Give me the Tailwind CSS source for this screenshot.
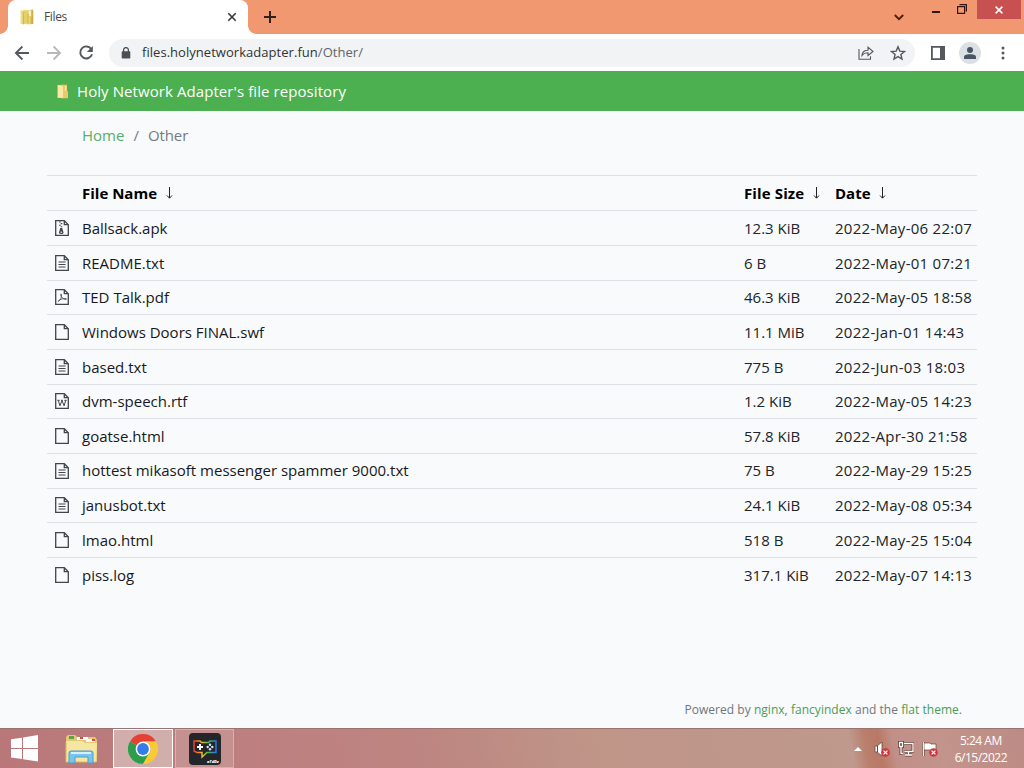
<!DOCTYPE html>
<html lang="en">

<head>
    <meta charset="UTF-8" />
    <meta name="viewport" content="width=device-width, initial-scale=1.0" />
    <title>Files</title>
    <script src="https://cdn.jsdelivr.net/npm/@tailwindcss/browser@4"></script>
</head>

<body class="flex h-screen w-screen flex-col overflow-hidden bg-[#f8fafc] font-['Open_Sans','Noto_Sans',sans-serif] text-[#212529]">
    <!-- icon sprites -->
    <svg class="absolute size-0">
        <defs>
            <linearGradient id="gold" x1="0" x2="1">
                <stop offset="0" stop-color="#f7e9a0" />
                <stop offset=".5" stop-color="#ead36c" />
                <stop offset="1" stop-color="#c9a83c" />
            </linearGradient>
            <linearGradient id="rainbow" x1="0" x2="1">
                <stop offset="0" stop-color="#ef3a2d" />
                <stop offset=".35" stop-color="#f4b82b" />
                <stop offset=".65" stop-color="#49bd4b" />
                <stop offset="1" stop-color="#2877ec" />
            </linearGradient>
            <symbol id="file" viewBox="0 0 14 16">
                <path d="M.7.7h8.6l4 4v10.6H.7zM9.3.7v4h4" fill="none" stroke="currentColor" stroke-width="1.3" />
            </symbol>
            <symbol id="text" viewBox="0 0 14 16">
                <path d="M.7.7h8.6l4 4v10.6H.7zM9.3.7v4h4" fill="none" stroke="currentColor" stroke-width="1.3" />
                <path d="M3.5 7h7M3.5 9.5h7M3.5 12h7" stroke="currentColor" stroke-width="1.1" />
            </symbol>
            <symbol id="zip" viewBox="0 0 14 16">
                <path d="M.7.7h8.6l4 4v10.6H.7zM9.3.7v4h4" fill="none" stroke="currentColor" stroke-width="1.3" />
                <path d="M4 2h1.7M5.7 3.6h1.6M4 5.2h1.7M5.7 6.8h1.6" stroke="currentColor" stroke-width="1.1" />
                <path d="M5.2 8h2l1.3 4.5q.2 1.5-2.2 1.5T4 12.5z" fill="currentColor" />
                <path d="M5.4 12.2h1.8" stroke="#f8fafc" />
            </symbol>
            <symbol id="pdf" viewBox="0 0 14 16">
                <path d="M.7.7h8.6l4 4v10.6H.7zM9.3.7v4h4" fill="none" stroke="currentColor" stroke-width="1.3" />
                <path d="M2.8 12.7C5.5 11.4 7 8 6.5 5.5c-.2-.8-.9-.7-.9 0 .2 2.6 2.7 4.9 5.4 5 .7-.1.6-.8 0-.9-2.4-.3-5.2.4-7.7 2.1" fill="none" stroke="currentColor" stroke-width=".8" />
            </symbol>
            <symbol id="word" viewBox="0 0 14 16">
                <path d="M.7.7h8.6l4 4v10.6H.7zM9.3.7v4h4" fill="none" stroke="currentColor" stroke-width="1.3" />
                <path d="M2.3 7.3h2.4M6 7.3h2M9.3 7.3h2.4M3.4 7.5l1.5 5.3L7 7.5l2.1 5.3 1.6-5.3" fill="none" stroke="currentColor" stroke-width="1" />
            </symbol>
            <symbol id="arrow" viewBox="0 0 7 12">
                <path d="M3.5 0v11M1 8.5l2.500 2.700L6 8.500" fill="none" stroke="#222" />
            </symbol>
            <symbol id="error" viewBox="0 0 9 9">
                <circle cx="4.5" cy="4.5" r="4.3" fill="#cf3540" />
                <path d="m2.6 2.6 3.8 3.8m0-3.8L2.6 6.4" stroke="#fff" stroke-width="1.3" />
            </symbol>
            <symbol id="folder" viewBox="0 0 14 16">
                <path d="M.5 1.5 6 .5v14l-3 1-2.500-1z" fill="#efdf8a" />
                <path d="m6 1.500 6.500-1 .8 1V15L6 15.500z" fill="url(#gold)" />
                <path d="M3 2.500 8 1v13l-5 1.500z" fill="#e4d068" />
                <path d="M8 5v10M3.200 3v12M12 8v7" stroke="#b89e38" stroke-width=".6" />
                <path d="M9 1.500h2V7H9z" fill="#faf3c8" />
            </symbol>
        </defs>
    </svg>

    <!-- tab strip -->
    <div class="flex h-[34px] shrink-0 bg-[#f29871] pl-2">
        <div class="relative flex w-60 items-center rounded-t-lg bg-white pl-3 pr-[11px]">
            <span class="absolute -left-2 bottom-0 size-2 bg-[radial-gradient(circle_at_0_0,transparent_7.5px,white_8px)]"></span>
            <span class="absolute -right-2 bottom-0 size-2 bg-[radial-gradient(circle_at_100%_0,transparent_7.5px,white_8px)]"></span>
            <svg class="h-4 w-[14px]"><use href="#folder" /></svg>
            <span class="ml-[10px] text-[12px] leading-4 tracking-[-0.35px] text-[#45484c]">Files</span>
            <svg class="ml-auto size-[10px]" viewBox="0 0 10 10"><path d="m1.3 1.3 7.4 7.4m0-7.4L1.3 8.7" stroke="#36393c" stroke-width="1.6" /></svg>
        </div>
        <svg class="ml-4 mt-[11px] size-3" viewBox="0 0 12 12"><path d="M6 0v12M0 6h12" stroke="#30201b" stroke-width="2" /></svg>
        <div class="ml-auto flex items-start">
            <svg class="mr-[28px] mt-[14px] h-[7px] w-[10px]" viewBox="0 0 10 7"><path d="m.8 1 4.2 4.2L9.2 1" fill="none" stroke="#4b1c0c" stroke-width="1.8" /></svg>
            <svg class="mr-[17px] mt-[11px] h-[2px] w-2" viewBox="0 0 8 2"><path d="M0 1h8" stroke="#35150d" stroke-width="2" /></svg>
            <svg class="mr-[10px] mt-1 size-[10px]" viewBox="0 0 10 10"><path d="M.6 2.6h7v6.8h-7zM2.5.6h6.9v7" fill="none" stroke="#35150d" stroke-width="1.2" /></svg>
            <div class="mr-[3px] flex h-[19px] w-[44px] items-center justify-center bg-[#c75050]">
                <svg class="size-2" viewBox="0 0 8 8"><path d="m.6.6 6.8 6.8m0-6.8L.6 7.4" stroke="#fff" stroke-width="1.5" /></svg>
            </div>
        </div>
    </div>

    <!-- address bar -->
    <div class="flex h-[37px] shrink-0 items-center bg-white pl-[14px] pr-[19px] text-[#54585d]">
        <svg class="size-4" viewBox="0 0 16 16"><path d="M15 8H2m6.4-6.5L1.9 8l6.5 6.5" fill="none" stroke="currentColor" stroke-width="1.8" /></svg>
        <svg class="ml-4 size-4 text-[#b6b8ba]" viewBox="0 0 16 16"><path d="M1 8h13M7.6 1.5 14.1 8l-6.5 6.5" fill="none" stroke="currentColor" stroke-width="1.8" /></svg>
        <svg class="ml-4 size-4" viewBox="0 0 16 16"><path d="M13.2 4A6 6 0 1 0 14 9.2" fill="none" stroke="currentColor" stroke-width="1.9" /><path d="M14.8 1v6H8.900z" fill="currentColor" /></svg>
        <div class="ml-[15px] flex h-7 flex-1 items-center rounded-full bg-[#f1f3f4] pl-3 pr-[9px]">
            <svg class="h-3 w-[10px]" viewBox="0 0 10 12"><rect x=".7" y="4.2" width="8.6" height="7.3" rx=".8" fill="#4c5055" /><path d="M2.6 5V3a2.4 2.4 0 0 1 4.8 0v2" fill="none" stroke="#4c5055" stroke-width="1.3" /></svg>
            <span class="ml-[11px] text-[13px] tracking-[0.04px] text-[#303337]">files.holynetworkadapter.fun<span class="text-[#606469]">/Other/</span></span>
            <svg class="ml-auto h-[14px] w-4" viewBox="0 0 16 14"><path d="M1 3v10.2h11.500v-3M4 9.300c.4-3.500 2.400-5 6-5V1.200l5 4.300-5 4V6.800c-2.700-.1-4.500.6-6 2.500z" fill="none" stroke="currentColor" stroke-width="1.1" /></svg>
            <svg class="ml-4 size-4" viewBox="0 0 16 16"><path d="m8 1.800 1.800 4.300 4.700.4-3.600 3 1.100 4.600-4-2.500-4 2.500 1.100-4.600-3.600-3 4.700-.4z" fill="none" stroke="currentColor" stroke-width="1.4" /></svg>
        </div>
        <svg class="ml-4 h-[14px] w-[14px]" viewBox="0 0 14 14"><path d="M.9.9h12.200v12.200H.9z" fill="none" stroke="currentColor" stroke-width="1.800" /><path d="M9 0h5v14H9z" fill="currentColor" /></svg>
        <div class="ml-[14px] flex size-[22px] items-center justify-center rounded-full bg-[#dcdfe3]">
            <svg class="size-3" viewBox="0 0 12 12"><circle cx="6" cy="3" r="3" fill="#495564" /><path d="M0 12V9.800C0 7.700 4 7.200 6 7.200s6 .5 6 2.600V12z" fill="#495564" /></svg>
        </div>
        <svg class="ml-5 h-[14px] w-1" viewBox="0 0 4 14"><circle cx="2" cy="2" r="1.500" fill="currentColor" /><circle cx="2" cy="7" r="1.500" fill="currentColor" /><circle cx="2" cy="12" r="1.500" fill="currentColor" /></svg>
    </div>

    <!-- site header -->
    <header class="flex h-10 shrink-0 items-center bg-[#4caf50] pl-[57px] text-white">
        <svg class="h-[15px] w-3" viewBox="0 0 12 15"><path d="M.5 1h5v13h-5z" fill="#f7d987" /><path d="M4 .8h6v6l1 1v6.500H4z" fill="#edc66d" /><path d="m1 1 5 1.500V14L1 13z" fill="#ffe7a4" /><path d="M8.800 2v5" stroke="#fff2ce" /></svg>
        <h1 class="ml-2 text-[15px] tracking-[0.08px]">Holy Network Adapter's file repository</h1>
    </header>

    <main class="flex-1 px-[47px]">
        <nav class="flex h-[49px] items-center pl-[35px] text-[15px] text-[#757b81]">
            <a href="/" class="text-[#5bad67]">Home</a>
            <span class="px-[9px]">/</span>
            <span class="tracking-[-0.1px]">Other</span>
        </nav>
        <div class="mt-[15px] grid h-[36.4px] grid-cols-[35px_662px_91px_1fr] items-center border-y border-[#dee2e6] text-[15px] font-bold text-black">
            <span></span>
            <span class="flex items-center gap-[9px]">File Name<svg class="h-3 w-[7px]"><use href="#arrow" /></svg></span>
            <span class="flex items-center gap-[9px] tracking-[0.12px]">File Size<svg class="h-3 w-[7px]"><use href="#arrow" /></svg></span>
            <span class="flex items-center gap-2">Date<svg class="h-3 w-[7px]"><use href="#arrow" /></svg></span>
        </div>
        <div id="files" class="text-[15px]"></div>
    </main>

    <footer class="flex h-[37px] shrink-0 justify-end pr-[62px] text-[12px] leading-[37px] tracking-[0.03px] text-[#70767c]">
        <p>Powered by <a class="text-[#4b9d56]">nginx</a>, <a class="text-[#4b9d56]">fancyindex</a> and the <a class="text-[#4b9d56]">flat theme</a>.</p>
    </footer>

    <!-- taskbar -->
    <div class="flex h-10 shrink-0 items-center border-t border-[#99736f] bg-[linear-gradient(80deg,#b97779_0,#bd7f80_240px,#bd8681_430px,#bf9588_580px,#bf998d_842px,#b9806d_856px,#b97865_870px,#c18f87_884px,#c2948b_930px,#bc8a84_1024px)]">
        <svg class="ml-[11px] h-[27px] w-[27px]" viewBox="0 0 27 27"><path d="M0 4.200 11 2.700v10.200H0zM12 2.500 27 0v12.900H12zM0 13.900h11V24L0 22.500zM12 13.900h15v12.700L12 24.200z" fill="#fff" /></svg>
        <svg class="ml-[27px] h-[30px] w-[34px]" viewBox="0 0 34 30">
            <path d="M1 3 3 1h7l2 2h18l2 3v22H1z" fill="#e5c875" />
            <path d="M4 2h5v3H4z" fill="#58a548" /><path d="M12 3h11v3H12z" fill="#fff" /><path d="M21 5h9v3h-9z" fill="#fafafa" /><path d="M15 3h3v2h-3zM27 5h3v2h-3z" fill="#d84d3a" />
            <path d="M1 7h16l3 2h12l-1 19H1z" fill="#f5e6a3" /><path d="M1 8v20h30" fill="none" stroke="#dabc60" />
            <path d="M4 29V19q0-2 2-2h20q2 0 2 2v10h-5v-6H10v6z" fill="#78c5ec" stroke="#4f9dcc" />
            <path d="M6 19h20" stroke="#d1f1ff" stroke-width="2" />
        </svg>
        <div class="ml-[14px] flex h-[39px] w-[60px] items-center justify-center border border-white bg-[#d1aeac]">
            <svg class="size-[30px]" viewBox="0 0 30 30">
                <path d="M15 15 2 7.500A15 15 0 0 1 28 7.500H15z" fill="#e44134" />
                <path d="M2 7.500A15 15 0 0 0 15 30l6.500-11.200L15 15z" fill="#2c9d4c" />
                <path d="M28 7.500A15 15 0 0 1 15 30l6.500-11.200A7.500 7.500 0 0 0 15 7.500z" fill="#f9ca32" />
                <circle cx="15" cy="15" r="7.400" fill="#fff" /><circle cx="15" cy="15" r="5.900" fill="#347de8" />
            </svg>
        </div>
        <div class="ml-[2px] flex h-[39px] w-[59px] items-center justify-center border border-[#d9b0ae] bg-[#c49090]">
            <svg class="size-8" viewBox="0 0 32 32">
                <rect width="32" height="32" rx="4" fill="#242629" />
                <path d="M5 8h6l1.500 1.500h7L21 8h6v11.500h-9L13 24v-4.500H8L5 18z" fill="none" stroke="url(#rainbow)" stroke-width="1.500" />
                <path d="M11 11v6M8 14h6" stroke="#fff" stroke-width="2" />
                <g fill="#cfe6ff"><circle cx="21" cy="11.700" r="1.200" /><circle cx="21" cy="16.300" r="1.200" /><circle cx="18.700" cy="14" r="1.200" /><circle cx="23.300" cy="14" r="1.200" /></g>
                <text x="18" y="30" fill="#fff" font-family="Open Sans" font-size="4" font-weight="800" font-style="italic">aTdDz</text>
            </svg>
        </div>
        <div class="ml-auto flex items-center pr-[17px]">
            <svg class="h-1 w-2" viewBox="0 0 8 4"><path d="m4 0 4 4H0z" fill="#fff" /></svg>
            <svg class="ml-3 h-4 w-4" viewBox="0 0 16 16"><path d="M1 5h2l5-4v14l-5-4H1z" fill="#fff" stroke="#6a4741" stroke-width=".8" /><path d="M3.500 5v6" stroke="#6a4741" /><use href="#error" x="7" y="7" width="9" height="9" /></svg>
            <svg class="ml-2 h-4 w-4" viewBox="0 0 16 16">
                <path d="M6 2.500h9v8H6.500M10.500 11v3M7 14h7M1.500 1.500h3v4h-3zM3 5.500v7h2" fill="none" stroke="#634038" stroke-width="3" />
                <path d="M6 2.500h9v8H6.500M10.500 11v3M7 14h7M1.500 1.500h3v4h-3zM3 5.500v7h2" fill="none" stroke="#fff" stroke-width="1.300" />
            </svg>
            <svg class="ml-2 h-4 w-4" viewBox="0 0 16 16"><path d="M1.300 1v14" stroke="#634038" stroke-width="2.500" /><path d="M2 2h6l1 1h5v7H9L8 9H2z" fill="#fff" stroke="#634038" stroke-width=".7" /><path d="M1.300 1v14" stroke="#fff" stroke-width="1.200" /><use href="#error" x="7" y="7" width="9" height="9" /></svg>
            <div class="ml-[17px] text-center text-[12px] leading-[17px] tracking-[-0.5px] text-white">
                <div>5:24 AM</div>
                <div>6/15/2022</div>
            </div>
        </div>
    </div>

    <script>
        const files = [
            ["zip", "Ballsack.apk", "12.3 KiB", "2022-May-06 22:07"],
            ["text", "README.txt", "6 B", "2022-May-01 07:21"],
            ["pdf", "TED Talk.pdf", "46.3 KiB", "2022-May-05 18:58"],
            ["file", "Windows Doors FINAL.swf", "11.1 MiB", "2022-Jan-01 14:43"],
            ["text", "based.txt", "775 B", "2022-Jun-03 18:03"],
            ["word", "dvm-speech.rtf", "1.2 KiB", "2022-May-05 14:23"],
            ["file", "goatse.html", "57.8 KiB", "2022-Apr-30 21:58"],
            ["text", "hottest mikasoft messenger spammer 9000.txt", "75 B", "2022-May-29 15:25"],
            ["text", "janusbot.txt", "24.1 KiB", "2022-May-08 05:34"],
            ["file", "lmao.html", "518 B", "2022-May-25 15:04"],
            ["file", "piss.log", "317.1 KiB", "2022-May-07 14:13"]
        ];

        document.getElementById("files").innerHTML = files.map(([icon, name, size, date]) => `
            <div class="grid h-[34.65px] grid-cols-[35px_662px_91px_1fr] items-center border-b border-[#dee2e6] last:border-0">
                <svg class="ml-2 h-4 w-[14px] text-[#41464b]"><use href="#${icon}" /></svg>
                <a class="text-[#17191c]">${name}</a>
                <span class="whitespace-nowrap">${size}</span>
                <span class="whitespace-nowrap tracking-[0.27px]">${date}</span>
            </div>`).join("");
    </script>
</body>

</html>
